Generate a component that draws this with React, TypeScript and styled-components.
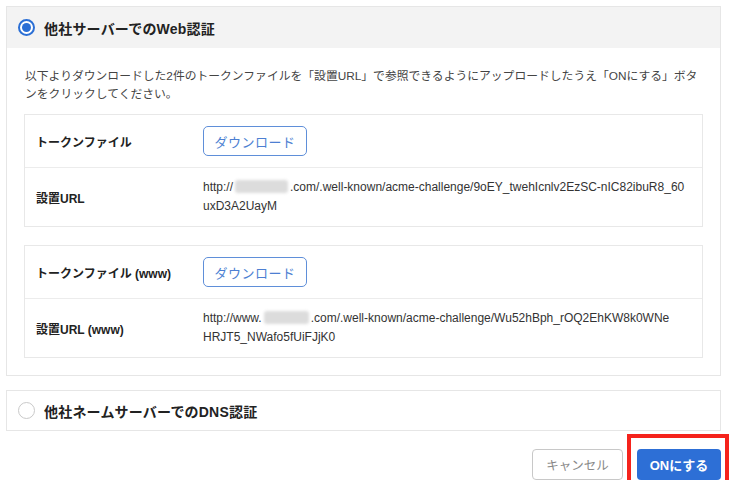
import React from "react";
import styled, { createGlobalStyle } from "styled-components";

const Global = createGlobalStyle`
  html, body { margin: 0; padding: 0; background: #fff; }
  body {
    font-family: "Liberation Sans", "Noto Sans CJK JP", sans-serif;
    color: #222;
    -webkit-font-smoothing: antialiased;
  }
  * { box-sizing: border-box; }
`;

const Page = styled.div`
  width: 735px;
  padding: 6px 14px 0 6px;
  display: flex;
  flex-direction: column;
`;

const Card = styled.section`
  border: 1px solid #e6e6e6;
  background: #fff;
  & + & { margin-top: 14px; }
`;

const CardHeader = styled.div<{ $active?: boolean }>`
  height: ${(p) => (p.$active ? "41px" : "39px")};
  display: flex;
  align-items: center;
  gap: 9px;
  padding-left: 11px;
  background: ${(p) => (p.$active ? "#f3f3f3" : "#fff")};
`;

const Radio = styled.span<{ $checked?: boolean }>`
  width: 17px;
  height: 17px;
  border-radius: 50%;
  flex: none;
  border: ${(p) => (p.$checked ? "2px solid #2b6fd5" : "1px solid #c9c9c9")};
  background: #fff;
  display: flex;
  align-items: center;
  justify-content: center;
  &::after {
    content: "";
    display: ${(p) => (p.$checked ? "block" : "none")};
    width: 9px;
    height: 9px;
    border-radius: 50%;
    background: #2b6fd5;
  }
`;

const Title = styled.h2`
  margin: 0;
  font-size: 14px;
  font-weight: 700;
  color: #222;
  letter-spacing: 0.2px;
`;

const CardBody = styled.div`
  padding: 19px 17px 17px 17px;
  display: flex;
  flex-direction: column;
`;

const Description = styled.p`
  margin: 0 0 11px 1px;
  font-size: 11.8px;
  line-height: 18px;
  color: #444;
  white-space: nowrap;
`;

const Table = styled.div`
  border: 1px solid #e8e8e8;
  display: grid;
  grid-template-columns: 178px 1fr;
  & + & { margin-top: 18px; }
`;

const LabelCell = styled.div<{ $first?: boolean }>`
  padding: 0 11px;
  display: flex;
  align-items: center;
  font-size: 12px;
  font-weight: 700;
  color: #222;
  border-top: ${(p) => (p.$first ? "none" : "1px solid #ececec")};
`;

const ValueCell = styled.div<{ $first?: boolean }>`
  padding: ${(p) => (p.$first ? "11px 10px 11px 0" : "10px 10px 10px 0")};
  display: flex;
  align-items: center;
  border-top: ${(p) => (p.$first ? "none" : "1px solid #ececec")};
`;

const OutlineButton = styled.button`
  height: 30px;
  width: 104px;
  border: 1px solid #5f8fd9;
  border-radius: 5px;
  background: #fff;
  color: #4d7fd2;
  font-family: inherit;
  font-size: 13px;
  letter-spacing: 0.5px;
  cursor: pointer;
`;

const Url = styled.div`
  font-size: 12px;
  line-height: 19px;
  color: #333;
  white-space: nowrap;
`;

const Blur = styled.span<{ $w: number }>`
  display: inline-block;
  width: ${(p) => p.$w}px;
  height: 13px;
  vertical-align: -2px;
  margin: 0 2px;
  background: #dcdcdc;
  border-radius: 3px;
  filter: blur(1.5px);
`;

const Actions = styled.div`
  display: flex;
  justify-content: flex-end;
  align-items: flex-start;
  gap: 14px;
  margin-top: 18px;
`;

const CancelButton = styled.button`
  width: 91px;
  height: 31px;
  border: 1px solid #c8c8c8;
  border-radius: 4px;
  background: #fff;
  color: #888;
  font-family: inherit;
  font-size: 12.5px;
  cursor: pointer;
`;

const Highlight = styled.div`
  position: relative;
  display: flex;
  &::after {
    content: "";
    position: absolute;
    left: -10px;
    right: -8px;
    top: -15px;
    bottom: -8px;
    border: 4px solid #f5231c;
    pointer-events: none;
  }
`;

const PrimaryButton = styled.button`
  width: 84px;
  height: 31px;
  border: none;
  border-radius: 4px;
  background: #2d6fd6;
  color: #fff;
  font-family: inherit;
  font-size: 13px;
  font-weight: 700;
  cursor: pointer;
`;

type Row = { label: string; kind: "button" } | { label: string; kind: "url"; prefix: string; blur: number; rest1: string; rest2: string };

const tables: Row[][] = [
  [
    { label: "トークンファイル", kind: "button" },
    {
      label: "設置URL",
      kind: "url",
      prefix: "http://",
      blur: 53,
      rest1: ".com/.well-known/acme-challenge/9oEY_twehIcnlv2EzSC-nIC82ibuR8_60",
      rest2: "uxD3A2UayM",
    },
  ],
  [
    { label: "トークンファイル (www)", kind: "button" },
    {
      label: "設置URL (www)",
      kind: "url",
      prefix: "http://www.",
      blur: 45,
      rest1: ".com/.well-known/acme-challenge/Wu52hBph_rOQ2EhKW8k0WNe",
      rest2: "HRJT5_NWafo5fUiFJjK0",
    },
  ],
];

export default function App() {
  return (
    <>
      <Global />
      <Page>
        <Card>
          <CardHeader $active>
            <Radio $checked />
            <Title>他社サーバーでのWeb認証</Title>
          </CardHeader>
          <CardBody>
            <Description>
              以下よりダウンロードした2件のトークンファイルを「設置URL」で参照できるようにアップロードしたうえ「ONにする」ボタ
              <br />
              ンをクリックしてください。
            </Description>
            {tables.map((rows, ti) => (
              <Table key={ti}>
                {rows.map((r, ri) => (
                  <React.Fragment key={ri}>
                    <LabelCell $first={ri === 0}>{r.label}</LabelCell>
                    <ValueCell $first={ri === 0}>
                      {r.kind === "button" ? (
                        <OutlineButton>ダウンロード</OutlineButton>
                      ) : (
                        <Url>
                          {r.prefix}
                          <Blur $w={r.blur} />
                          {r.rest1}
                          <br />
                          {r.rest2}
                        </Url>
                      )}
                    </ValueCell>
                  </React.Fragment>
                ))}
              </Table>
            ))}
          </CardBody>
        </Card>
        <Card>
          <CardHeader>
            <Radio />
            <Title>他社ネームサーバーでのDNS認証</Title>
          </CardHeader>
        </Card>
        <Actions>
          <CancelButton>キャンセル</CancelButton>
          <Highlight>
            <PrimaryButton>ONにする</PrimaryButton>
          </Highlight>
        </Actions>
      </Page>
    </>
  );
}
